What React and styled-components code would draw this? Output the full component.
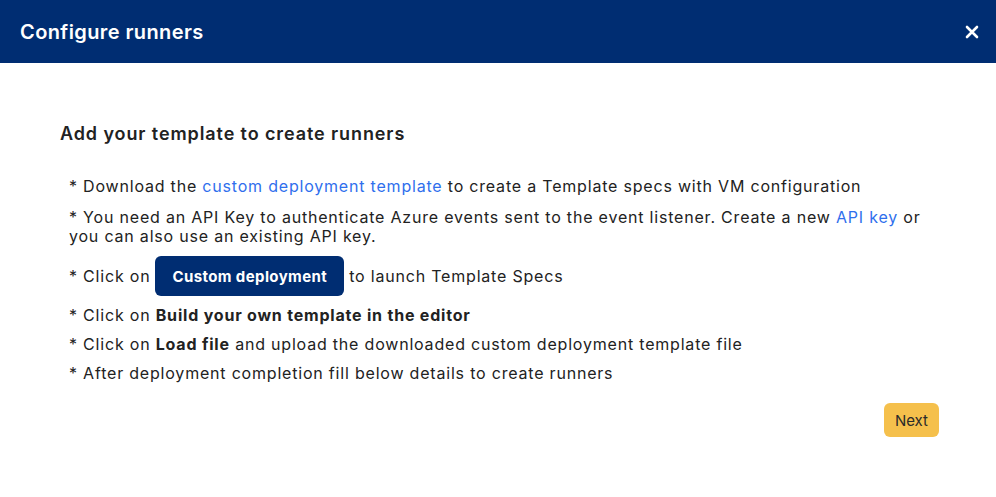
import React from 'react'
import styled, { createGlobalStyle } from 'styled-components'

const GlobalStyle = createGlobalStyle`
  html, body { margin: 0; padding: 0; background: #ffffff; }
  body { font-family: Inter, "Noto Sans", sans-serif; }
`;

const Modal = styled.div`
  width: 996px;
  height: 497px;
  background: #ffffff;
  display: flex;
  flex-direction: column;
`;

const Header = styled.div`
  height: 63px;
  background: #002d72;
  display: flex;
  align-items: center;
  justify-content: space-between;
  padding: 0 20px;
  box-sizing: border-box;
`;

const Title = styled.div`
  color: #ffffff;
  font-size: 20px;
  font-weight: 600;
  letter-spacing: 0.4px;
`;

const Close = styled.button`
  border: none;
  background: transparent;
  color: #ffffff;
  padding: 0;
  display: flex;
  cursor: pointer;
  margin-right: -3px;
`;

const Body = styled.div`
  padding: 60px 57px 0 60px;
  display: flex;
  flex-direction: column;
`;

const Heading = styled.h3`
  margin: 0 0 33px 0;
  font-size: 18px;
  font-weight: 600;
  letter-spacing: 0.9px;
  color: #222222;
`;

const List = styled.div`
  padding-left: 9px;
  display: flex;
  flex-direction: column;
  gap: 10px;
  font-size: 16px;
  letter-spacing: 0.8px;
  line-height: 19px;
  color: #222222;
`;

const Item = styled.div`
  display: flex;
  align-items: center;
  flex-wrap: wrap;
`;

const Text = styled.div`
  margin-bottom: ${p => (p.$lead ? '2px' : '0')};
`;

const Link = styled.a`
  color: #2f6fed;
  text-decoration: none;
`;

const Deploy = styled.button`
  height: 40px;
  margin: 0 5px;
  padding: 0 17px;
  border: none;
  border-radius: 6px;
  background: #002d72;
  color: #ffffff;
  font-family: inherit;
  font-size: 15px;
  letter-spacing: 0.4px;
  font-weight: 700;
`;

const Footer = styled.div`
  display: flex;
  justify-content: flex-end;
  margin-top: 20px;
`;

const Next = styled.button`
  height: 34px;
  padding: 0 11px;
  border: none;
  border-radius: 6px;
  background: #f5c04c;
  color: #2a2a2a;
  font-family: inherit;
  font-size: 15px;
`;

export default function App() {
  return (
    <Modal>
      <GlobalStyle />
      <Header>
        <Title>Configure runners</Title>
        <Close aria-label="close">
          <svg width="14" height="14" viewBox="0 0 14 14">
            <path d="M2 2 L12 12 M12 2 L2 12" stroke="#fff" strokeWidth="2.6" strokeLinecap="round" />
          </svg>
        </Close>
      </Header>
      <Body>
        <Heading>Add your template to create runners</Heading>
        <List>
          <Text $lead>* Download the <Link href="#">custom deployment template</Link> to create a Template specs with VM configuration</Text>
          <Text>* You need an API Key to authenticate Azure events sent to the event listener. Create a new <Link href="#">API key</Link> or you can also use an existing API key.</Text>
          <Item>* Click on <Deploy>Custom deployment</Deploy> to launch Template Specs</Item>
          <Text>* Click on <b>Build your own template in the editor</b></Text>
          <Text>* Click on <b>Load file</b> and upload the downloaded custom deployment template file</Text>
          <Text>* After deployment completion fill below details to create runners</Text>
        </List>
        <Footer>
          <Next>Next</Next>
        </Footer>
      </Body>
    </Modal>
  )
}
